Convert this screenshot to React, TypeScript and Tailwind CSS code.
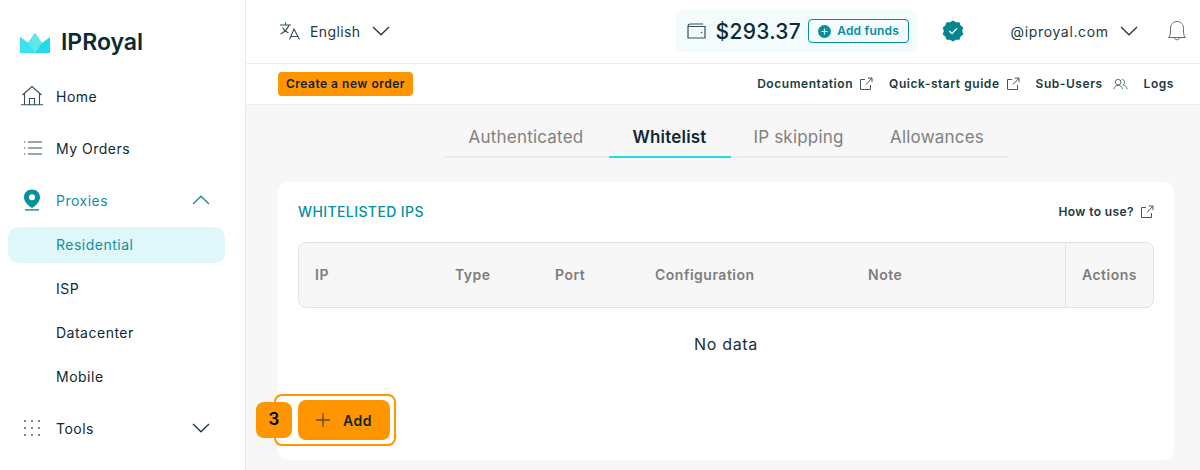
import React from "react";

const ExtIcon = () => (
  <svg width="14" height="14" viewBox="0 0 14 14" fill="none" stroke="#3f5a60" strokeWidth="1" className="shrink-0">
    <path d="M6 2.5H1.5V12.5H11.5V8" />
    <path d="M7 7.5L12.8 1.2M8.8 1H13V5.2" />
  </svg>
);

const Chevron = ({ up, color = "#23393f" }: { up?: boolean; color?: string }) => (
  <svg width="18" height="10" viewBox="0 0 18 10" fill="none" stroke={color} strokeWidth="1.3" className="shrink-0">
    <path d={up ? "M1 9L9 1.2L17 9" : "M1 1L9 8.8L17 1"} />
  </svg>
);

const NavItem = ({ icon, label, color = "text-[#0f2a31]", right }: { icon: React.ReactNode; label: string; color?: string; right?: React.ReactNode }) => (
  <div className={`flex h-[52px] items-center pl-5 pr-[35px] ${color}`}>
    <div className="flex w-[36px] shrink-0 items-center">{icon}</div>
    <span className="text-[14px] font-normal tracking-[0.5px]">{label}</span>
    {right && <div className="ml-auto">{right}</div>}
  </div>
);

const SubItem = ({ label, active }: { label: string; active?: boolean }) => (
  <div className={`mx-2 flex h-9 w-[217px] items-center rounded-[10px] pb-[1px] pl-12 text-[14px] font-normal tracking-[0.5px] ${active ? "bg-[#e0f7f9] text-[#12909f]" : "text-[#0f2a31]"}`}>
    {label}
  </div>
);

const Tab = ({ label, active, w }: { label: string; active?: boolean; w: string }) => (
  <div className={`flex h-[42px] items-center justify-center border-b-2 pt-[3px] text-[17px] tracking-[0.2px] ${w} ${active ? "border-[#22dbe6] font-semibold text-[#0f2a31]" : "border-[#ececec] font-normal text-[#808080]"}`}>
    {label}
  </div>
);

const Th = ({ label, w }: { label: string; w: string }) => (
  <div className={`pb-[1px] text-[14px] font-semibold tracking-[0.5px] text-[#7d7d7d] ${w}`}>{label}</div>
);

const TopLink = ({ label, icon }: { label: string; icon?: React.ReactNode }) => (
  <div className="flex items-center gap-[6px] text-[12px] font-semibold tracking-[0.55px] text-[#1c3a40]">
    <span>{label}</span>
    {icon}
  </div>
);

export default function App() {
  return (
    <div className="flex h-[470px] w-[1200px] overflow-hidden bg-[#f7f7f7] font-['Inter',sans-serif]">
      <aside className="h-full w-[246px] shrink-0 border-r border-[#e8e8e8] bg-white">
        <div className="flex h-[70px] items-end gap-[11px] pb-[12px] pl-5">
          <svg width="30" height="20" viewBox="0 0 30 20" className="mb-[5px]">
            <path d="M0 4L8 10L15 0L22 10L30 4V20H0Z" fill="#22dbe6" />
            <path d="M8 10L15 20L22 10L15 0Z" fill="#5fe7ee" />
            <path d="M0 4L8 10L15 20H0Z" fill="#3ee2ea" />
          </svg>
          <span className="text-[23px] font-semibold leading-[32px] tracking-[0px] text-[#0b2a31]">IPRoyal</span>
        </div>
        <NavItem
          label="Home"
          icon={
            <svg width="24" height="22" viewBox="0 0 24 22" fill="none" stroke="#35505a" strokeWidth="1.1">
              <path d="M2.5 10L12 1.5L21.5 10M4.5 8.5V19.5M19.5 8.5V19.5M1 19.8H23M9.5 19.5V13.5H14.5V19.5" />
            </svg>
          }
        />
        <NavItem
          label="My Orders"
          icon={
            <svg width="20" height="16" viewBox="0 0 20 16" fill="none" stroke="#35505a" strokeWidth="1.2" className="ml-[3px]">
              <path d="M5 2H19M5 8H19M5 14H19M1 2H2.2M1 8H2.2M1 14H2.2" />
            </svg>
          }
        />
        <NavItem
          label="Proxies"
          color="text-[#12909f]"
          right={<Chevron up color="#12909f" />}
          icon={
            <svg width="18" height="22" viewBox="0 0 18 22" className="ml-[3px]">
              <path fillRule="evenodd" d="M9 0.5C4.3 0.5 1 4 1 8.2C1 12.5 5 16.5 9 19C13 16.5 17 12.5 17 8.2C17 4 13.7 0.5 9 0.5ZM9 5.3A3 3 0 1 1 9 11.3A3 3 0 0 1 9 5.3Z" fill="#04909f" />
              <rect x="2" y="20.2" width="14" height="1.4" fill="#04909f" />
            </svg>
          }
        />
        <div className="mt-[1px] flex flex-col gap-2">
          <SubItem label="Residential" active />
          <SubItem label="ISP" />
          <SubItem label="Datacenter" />
          <SubItem label="Mobile" />
        </div>
        <div className="mt-[7px]">
          <NavItem
            label="Tools"
            right={<Chevron />}
            icon={
              <svg width="16" height="16" viewBox="0 0 16 16" fill="#35505a" className="ml-[4px]">
                {[1, 8, 15].flatMap((y) => [1, 8, 15].map((x) => <circle key={`${x}-${y}`} cx={x} cy={y} r="0.9" />))}
              </svg>
            }
          />
        </div>
      </aside>

      <div className="flex min-w-0 flex-1 flex-col">
        <header className="flex h-16 shrink-0 items-center border-b border-[#ececec] bg-white pb-[1px] pl-[33px]">
          <svg width="22" height="20" viewBox="0 0 22 20" fill="none" stroke="#35505a" strokeWidth="1.1" className="shrink-0">
            <path d="M1 4H12M6.5 1.5V4M10 4C8.5 8.5 5.5 11 1.5 13M3.5 6.5C5 9.5 7 11 9.5 12M10.5 18.5L15 8L20.5 18.5M12 15.5H19" />
          </svg>
          <span className="ml-[9px] text-[14px] tracking-[0.4px] text-[#23393f]">English</span>
          <div className="ml-[11px]"><Chevron /></div>
          <div className="ml-[286px] flex h-[42px] w-[241px] shrink-0 items-center rounded-md bg-[#f3fbfc] pl-[11px]">
            <svg width="19" height="16" viewBox="0 0 19 16" fill="none" stroke="#35505a" strokeWidth="1.2" className="shrink-0">
              <path d="M1 3.5C1 2 2 1 3.5 1H16M1 3.5V15H18V3.5H1" />
              <circle cx="14.5" cy="9.5" r="0.8" fill="#35505a" stroke="none" />
            </svg>
            <span className="ml-[10px] text-[21px] font-medium leading-none tracking-[0.3px] text-[#0b2a31]">$293.37</span>
            <div className="ml-[7px] flex h-6 w-[101px] shrink-0 items-center justify-center gap-[6px] rounded-[4px] border border-[#04909f] text-[12px] font-semibold tracking-[0.2px] text-[#04909f]">
              <svg width="13" height="13" viewBox="0 0 13 13" className="shrink-0">
                <circle cx="6.5" cy="6.5" r="6.5" fill="#04909f" />
                <path d="M6.5 3.5V9.5M3.5 6.5H9.5" stroke="white" strokeWidth="1.2" />
              </svg>
              Add funds
            </div>
          </div>
          <svg width="22" height="22" viewBox="0 0 22 22" className="ml-[25px] shrink-0">
            <path d="M11 0.5L14 2.3L17.5 2.2L18.6 5.4L21.3 7.6L20.2 11L21.3 14.4L18.6 16.6L17.5 19.8L14 19.7L11 21.5L8 19.7L4.5 19.8L3.4 16.6L0.7 14.4L1.8 11L0.7 7.6L3.4 5.4L4.5 2.2L8 2.3Z" fill="#04858f" />
            <path d="M7.3 11L10 13.5L14.8 8.5" fill="none" stroke="white" strokeWidth="1.5" />
          </svg>
          <span className="ml-[47px] text-[14px] tracking-[0.65px] text-[#23393f]">@iproyal.com</span>
          <div className="ml-[11px]"><Chevron /></div>
          <svg width="20" height="22" viewBox="0 0 20 22" fill="none" stroke="#5d6f73" strokeWidth="1" className="ml-[29px] shrink-0">
            <path d="M1.5 17.5C3 16 3.5 14.5 3.5 11V8.5C3.5 4.5 6 1.5 10 1.5C14 1.5 16.5 4.5 16.5 8.5V11C16.5 14.5 17 16 18.5 17.5ZM7.5 17.5C7.5 20.5 12.5 20.5 12.5 17.5" />
          </svg>
        </header>

        <div className="flex h-[41px] shrink-0 items-center border-b border-[#ececec] bg-white pb-[1px] pl-[32px] pr-[26px]">
          <div className="flex h-6 w-[135px] items-center justify-center rounded-[4px] bg-[#ff9500] text-[12px] font-semibold tracking-[0.5px] text-[#12262b]">
            Create a new order
          </div>
          <div className="ml-auto flex items-center gap-4">
            <TopLink label="Documentation" icon={<ExtIcon />} />
            <TopLink label="Quick-start guide" icon={<ExtIcon />} />
            <TopLink
              label="Sub-Users"
              icon={
                <svg width="15" height="12" viewBox="0 0 16 12" fill="none" stroke="#3f5a60" strokeWidth="0.9" className="ml-[4px]">
                  <circle cx="5.5" cy="4" r="3" />
                  <path d="M0.8 11.5C1.5 8.8 3 7.5 5.5 7.5C8 7.5 9.5 8.8 10.2 11.5M9.5 1.2C12.5 0.8 13.5 5.5 10.5 7C13 7 14.5 9 15.2 11.5" />
                </svg>
              }
            />
            <TopLink label="Logs" />
          </div>
        </div>

        <main className="relative flex-1 pl-[32px] pr-[26px]">
          <div className="flex justify-center pr-[1px]">
            <div className="mt-[11px] flex">
              <Tab label="Authenticated" w="w-[165px]" />
              <Tab label="Whitelist" active w="w-[122px]" />
              <Tab label="IP skipping" w="w-[136px]" />
              <Tab label="Allowances" w="w-[141px]" />
            </div>
          </div>

          <section className="mt-[24px] h-[278px] rounded-[10px] bg-white px-5 pt-[19px]">
            <div className="flex items-center justify-between">
              <h2 className="text-[14px] font-medium tracking-[0.4px] text-[#04909f]">WHITELISTED IPS</h2>
              <div className="flex items-center gap-[6px] text-[12px] font-semibold tracking-[0.4px] text-[#1c3a40]">
                How to use? <ExtIcon />
              </div>
            </div>
            <div className="mt-[20px] flex h-[66px] items-center rounded-[8px] border border-[#e3e3e3] bg-[#f7f7f7] pl-4">
              <Th label="IP" w="w-[140px]" />
              <Th label="Type" w="w-[100px]" />
              <Th label="Port" w="w-[100px]" />
              <Th label="Configuration" w="w-[213px]" />
              <Th label="Note" w="w-[197px]" />
              <div className="flex h-full flex-1 items-center justify-center border-l border-[#e3e3e3]">
                <Th label="Actions" w="w-auto" />
              </div>
            </div>
            <div className="mt-[24px] text-center text-[16px] tracking-[0.7px] text-[#1c2f34]">No data</div>
            <div className="mt-[44px] flex h-10 w-[92px] items-center justify-center gap-[12px] rounded-[8px] bg-[#ff9500] pr-[1px] text-[14px] font-semibold tracking-[0.6px] text-[#12262b]">
              <svg width="16" height="16" viewBox="0 0 16 16" stroke="#5f4a2a" strokeWidth="1.3" className="shrink-0">
                <path d="M8 1V15M1 8H15" />
              </svg>
              Add
            </div>
          </section>

          <div className="absolute left-[28px] top-[289px] h-[52px] w-[122px] rounded-[8px] border-2 border-[#ff9500]" />
          <div className="absolute left-[10px] top-[297px] flex h-9 w-9 items-center justify-center rounded-[8px] bg-[#ff9500] text-[17px] font-semibold text-black">
            3
          </div>
        </main>
      </div>
    </div>
  );
}
